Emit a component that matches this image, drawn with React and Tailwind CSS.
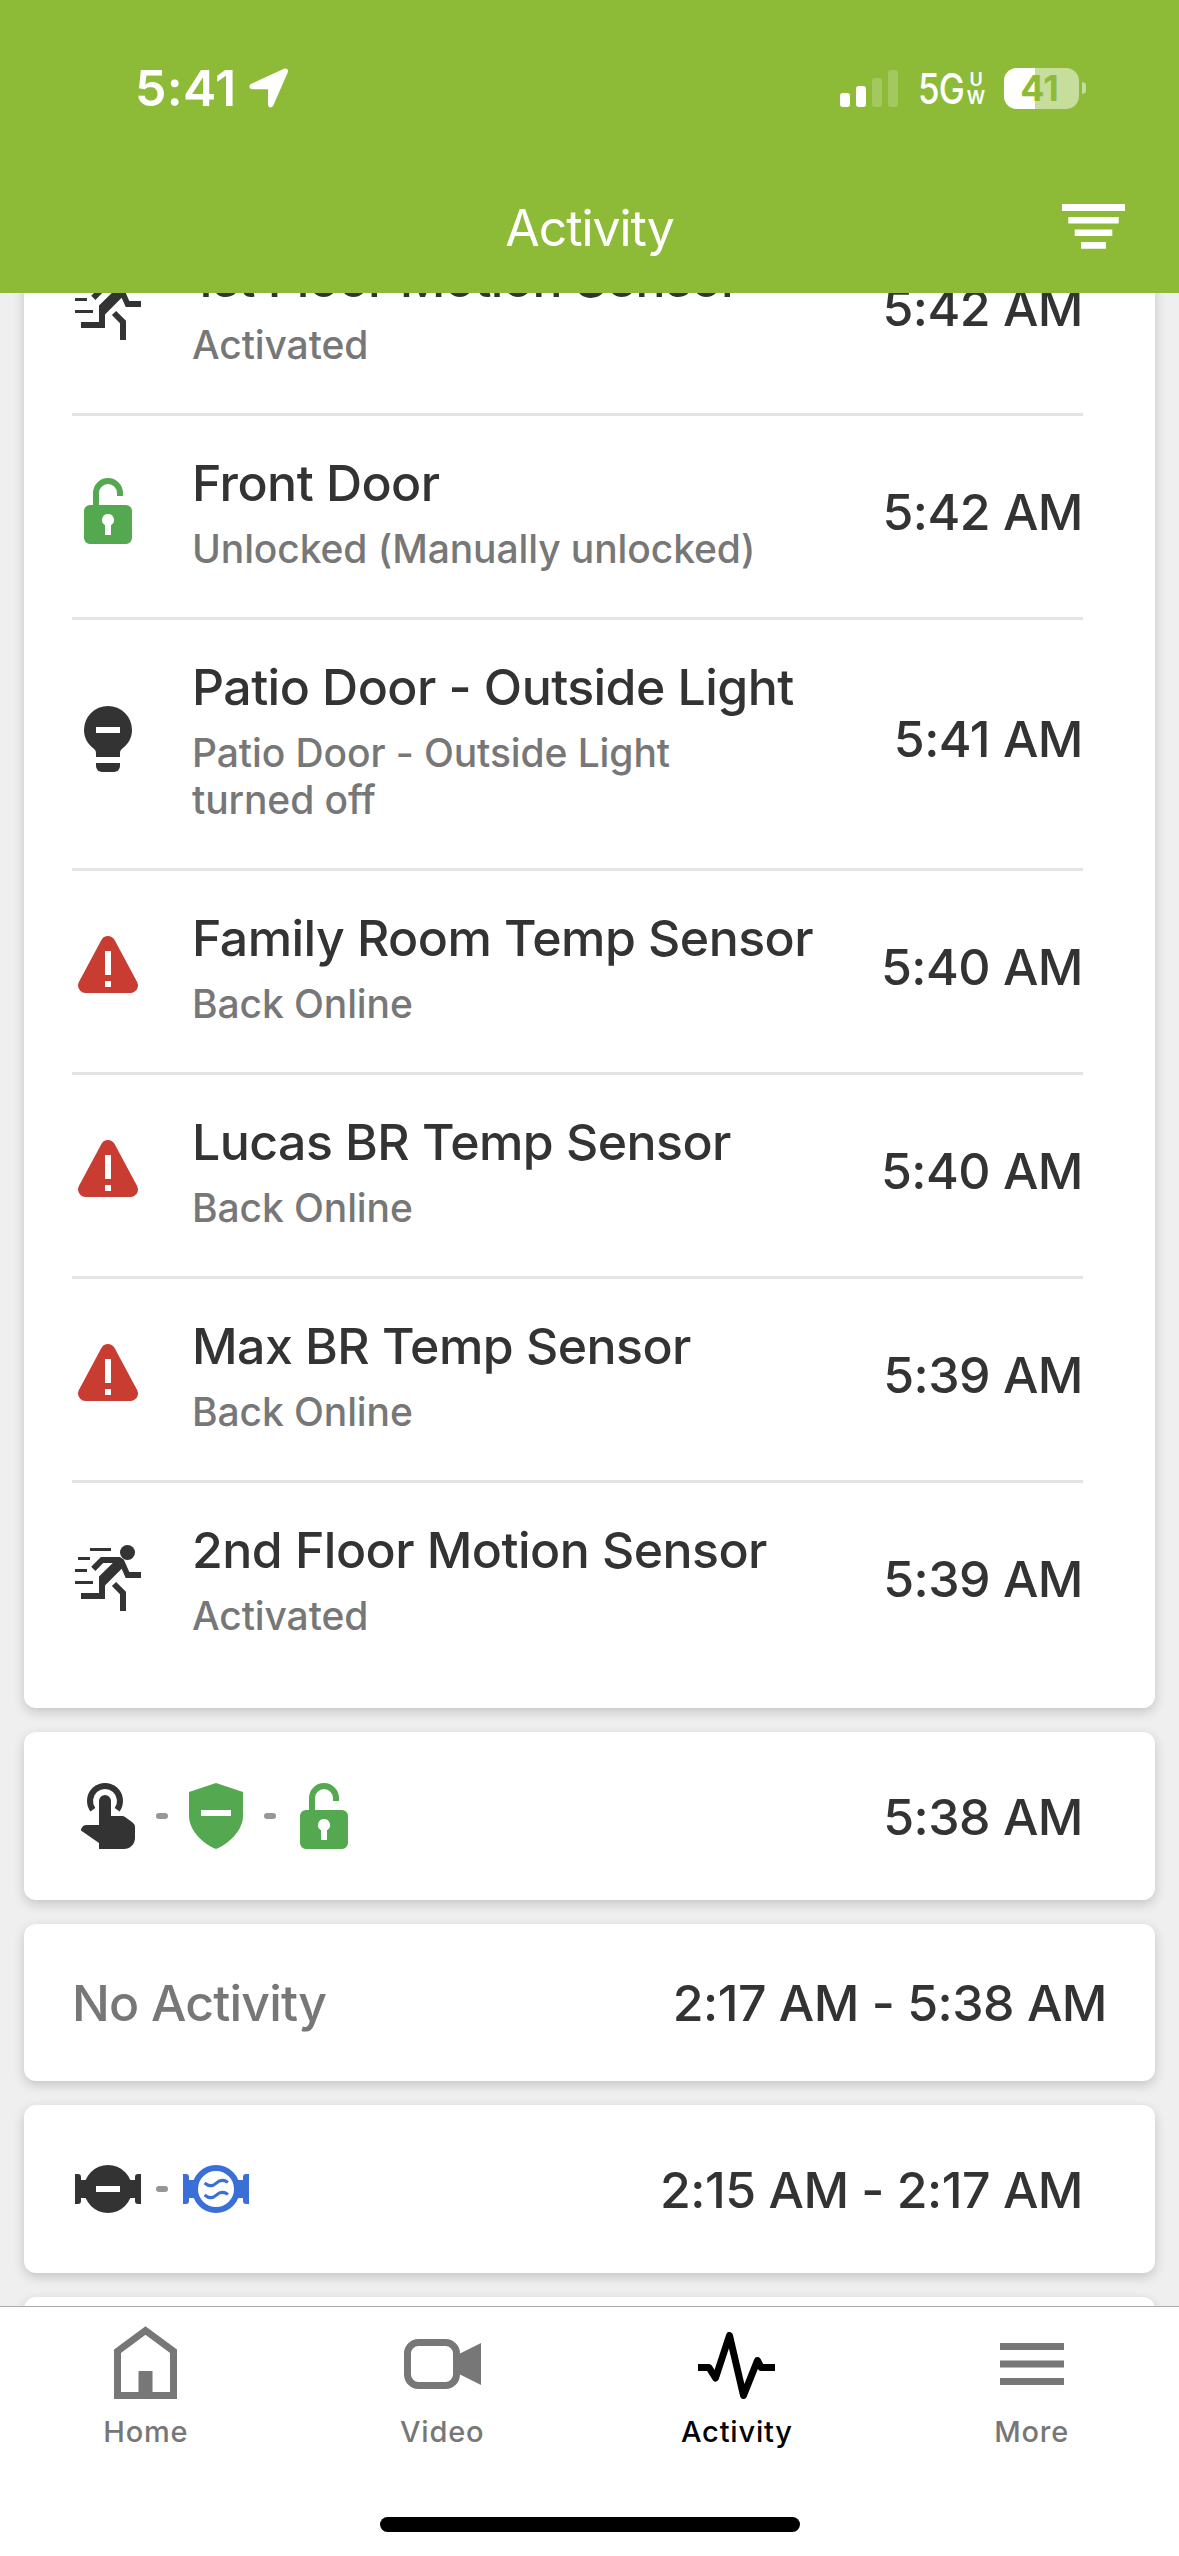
import React from 'react';

const UnlockIcon = () => (
    <svg viewBox="0 0 24 24" className="size-[72px] text-[#54a84f]" fill="currentColor">
        <path d="M7 11V6a5 5 0 0 1 10 0v1h-2V6a3 3 0 0 0-6 0v5z" />
        <path
            fillRule="evenodd"
            d="M6 10h12a2 2 0 0 1 2 2v9a2 2 0 0 1-2 2H6a2 2 0 0 1-2-2v-9a2 2 0 0 1 2-2zm6 3a2 2 0 0 0-1 3.73V20h2v-3.27A2 2 0 0 0 12 13z"
        />
    </svg>
);

const BulbIcon = () => (
    <svg viewBox="0 0 24 24" className="size-[72px] text-[#333]" fill="currentColor">
        <path
            fillRule="evenodd"
            d="M12 1a8 8 0 0 1 8 8c0 2.600-1.200 4.600-3.200 6.200-.5.4-.8.9-.8 1.600V18H8v-1.200c0-.7-.3-1.200-.8-1.600C5.200 13.600 4 11.600 4 9a8 8 0 0 1 8-8zM8 8v2h8V8z"
        />
        <path d="M8 20h8v1a2 2 0 0 1-2 2h-4a2 2 0 0 1-2-2z" />
    </svg>
);

const WarningIcon = () => (
    <svg viewBox="0 0 24 24" className="size-[72px]">
        <path d="M12 4.500 19.500 18.500h-15z" fill="#c83c32" stroke="#c83c32" strokeWidth="5" strokeLinejoin="round" />
        <path d="M11 7h2v8h-2zM11 17h2v2h-2z" fill="#fff" />
    </svg>
);

const MotionIcon = () => (
    <svg viewBox="0 0 24 24" className="size-[72px] text-[#333]" fill="currentColor">
        <path d="M6 2h7v1H6zM2 5h4v1H2zM1 9h4v1H1zM1 13h6v1H1z" />
        <circle cx="18.500" cy="3.500" r="2.500" />
        <path d="M3 17h6v-5.500L13.600 7h-3.200L7.800 9.700 6.400 8.250 9.650 5H16l1.250.8L19.100 10H23v2h-5.100l-1.350-3.100L11 14.500V19H3z" />
        <path d="M14.700 13.300 18 16.600V23h-2v-5.600l-2.700-2.700z" />
    </svg>
);

const TouchIcon = () => (
    <svg viewBox="0 0 24 24" className="size-[72px] text-[#333]">
        <path d="M6.950 9.900a5 5 0 1 1 8.100 0" fill="none" stroke="currentColor" strokeWidth="2" />
        <path
            fill="currentColor"
            d="M9 7a2 2 0 0 1 4 0v5h3.700q.6 0 1.100.4l2.400 1.800q.8.600.8 1.600v3.500a3.700 3.700 0 0 1-3.700 3.700H9v-2l-6-4.200v-.2A2 2 0 0 1 5 15h4z"
        />
    </svg>
);

const ShieldIcon = () => (
    <svg viewBox="0 0 24 24" className="size-[72px] text-[#54a84f]" fill="currentColor">
        <path
            fillRule="evenodd"
            d="M12 1l9 3v7.800c0 4.400-3.600 8.800-9 11.200-5.400-2.400-9-6.800-9-11.200V4zM7 10v2h10v-2z"
        />
    </svg>
);

const ValveBody = () => (
    <path
        fill="currentColor"
        d="M1 7h1a1 1 0 0 1 1 1v1h3v6H3v1a1 1 0 0 1-1 1H1zM23 7h-1a1 1 0 0 0-1 1v1h-3v6h3v1a1 1 0 0 0 1 1h1z"
    />
);

const ValveClosedIcon = () => (
    <svg viewBox="0 0 24 24" className="size-[72px] text-[#333]">
        <ValveBody />
        <circle cx="12" cy="12" r="8" fill="currentColor" />
        <path d="M8 11h8v2H8z" fill="#fff" />
    </svg>
);

const ValveOpenIcon = () => (
    <svg viewBox="0 0 24 24" className="size-[72px] text-[#396fd6]">
        <ValveBody />
        <circle cx="12" cy="12" r="7" fill="#fff" stroke="currentColor" strokeWidth="2" />
        <path
            d="M8.200 10c1.300 1.100 2.700 1.100 3.800.1s2.600-1.300 4-.3M8.200 14c1.300 1.100 2.700 1.100 3.800.1s2.600-1.300 4-.3"
            fill="none"
            stroke="currentColor"
            strokeWidth="1"
        />
    </svg>
);

const HomeIcon = () => (
    <svg viewBox="0 0 63 73" className="w-[63px] h-[73px] mb-1">
        <path d="M3.500 25.300 31.500 4.500l28 20.800v44.200h-56z" fill="none" stroke="currentColor" strokeWidth="7" />
        <path d="M24.500 45h14v24h-14z" fill="currentColor" />
    </svg>
);

const VideoIcon = () => (
    <svg viewBox="0 0 77 50" className="w-[77px] h-[50px]">
        <rect x="3.500" y="3.500" width="49" height="43" rx="11" fill="none" stroke="currentColor" strokeWidth="7" />
        <path d="M53 16 77 4v42L53 34z" fill="currentColor" />
    </svg>
);

const PulseIcon = () => (
    <svg viewBox="0 0 77 67" className="w-[77px] h-[67px] mt-0.5">
        <path
            d="M0 35.500h11L17.500 46 31.500 3.500 45.500 63.500 59.500 28.500 63 35.500H77"
            fill="none"
            stroke="currentColor"
            strokeWidth="7"
            strokeLinejoin="round"
        />
    </svg>
);

const MenuIcon = () => (
    <svg viewBox="0 0 64 42" className="w-[64px] h-[42px]" fill="currentColor">
        <path d="M0 0h64v7H0zM0 17.500h64v7H0zM0 35h64v7H0z" />
    </svg>
);

const events = [
    { icon: MotionIcon, name: '1st Floor Motion Sensor', detail: 'Activated', time: '5:42 AM' },
    { icon: UnlockIcon, name: 'Front Door', detail: 'Unlocked (Manually unlocked)', time: '5:42 AM' },
    { icon: BulbIcon, name: 'Patio Door - Outside Light', detail: 'Patio Door - Outside Light turned off', time: '5:41 AM' },
    { icon: WarningIcon, name: 'Family Room Temp Sensor', detail: 'Back Online', time: '5:40 AM' },
    { icon: WarningIcon, name: 'Lucas BR Temp Sensor', detail: 'Back Online', time: '5:40 AM' },
    { icon: WarningIcon, name: 'Max BR Temp Sensor', detail: 'Back Online', time: '5:39 AM' },
    { icon: MotionIcon, name: '2nd Floor Motion Sensor', detail: 'Activated', time: '5:39 AM' },
];

const tabs = [
    { label: 'Home', icon: HomeIcon },
    { label: 'Video', icon: VideoIcon },
    { label: 'Activity', icon: PulseIcon, active: true },
    { label: 'More', icon: MenuIcon },
];

const Card = ({ className = '', children }) => (
    <div className={`bg-white rounded-xl shadow-[0_4px_12px_rgba(0,0,0,0.18)] shrink-0 ${className}`}>
        {children}
    </div>
);

const Time = ({ children }) => (
    <span className="pt-px text-[50px] leading-[64px] tracking-[-0.5px] whitespace-nowrap">{children}</span>
);

const EventRow = ({ icon: Icon, name, detail, time, last }) => (
    <div className={`flex items-center pt-[34px] pb-[45px] ${last ? '' : 'border-b-[3px] border-[#e4e4e4]'}`}>
        <Icon />
        <div className="ml-12 pt-px flex-1 min-w-0">
            <div className="text-[50px] leading-[64px] tracking-[-0.55px] whitespace-nowrap">{name}</div>
            <div className="mt-2.5 max-w-[575px] text-[39px] leading-[47px] tracking-[-0.1px] text-[#777]">{detail}</div>
        </div>
        <Time>{time}</Time>
    </div>
);

const IconSummary = ({ icons, time }) => (
    <Card className="h-[168px] pl-12 pr-[72px] flex items-center justify-between">
        <div className="flex items-center gap-3">
            {icons.map((Icon, index) => (
                <React.Fragment key={index}>
                    {index > 0 && <span className="w-3 h-1.5 rounded-full bg-[#969696]" />}
                    <Icon />
                </React.Fragment>
            ))}
        </div>
        <Time>{time}</Time>
    </Card>
);

const StatusBar = () => (
    <div className="h-[176px] pl-[135px] pr-[93px] flex items-center justify-between">
        <div className="flex items-center gap-[13px]">
            <span className="text-[50px] leading-none font-semibold tracking-[0.3px]">5:41</span>
            <svg viewBox="0 0 40 40" className="size-10" fill="currentColor">
                <path d="M35 .8c2.700-1.200 4.900.900 3.700 3.700L24.300 37.600c-1.300 2.900-5.300 2.100-5.300-1.100V21.200H3.500C.2 21.200-.700 17.200 2.300 15.800z" />
            </svg>
        </div>
        <div className="flex items-center">
            <div className="flex items-end gap-1.5 h-[37px]">
                <span className="w-2.5 h-3.5 rounded-[3px] bg-white" />
                <span className="w-2.5 h-[21px] rounded-[3px] bg-white" />
                <span className="w-2.5 h-[29px] rounded-[3px] bg-white/20" />
                <span className="w-2.5 h-[37px] rounded-[3px] bg-white/20" />
            </div>
            <div className="ml-5 mt-0.5 flex items-center">
                <span className="w-[48px] text-[42px] leading-none font-medium tracking-[-1px] whitespace-nowrap origin-left scale-x-[0.83]">5G</span>
                <span className="ml-0.5 w-4 flex flex-col items-center text-[18px] leading-[18px] font-semibold">
                    <span>U</span>
                    <span>W</span>
                </span>
            </div>
            <div className="ml-5 relative w-[75px] h-[41px] rounded-[13px] bg-white/50 overflow-hidden">
                <div className="w-[31px] h-full bg-white" />
                <span className="absolute inset-0 pr-1 flex items-center justify-center text-[36px] leading-none font-bold text-[#8dbb38]">
                    41
                </span>
            </div>
            <span className="ml-[3px] w-1 h-3 rounded-r-full bg-white/50" />
        </div>
    </div>
);

const Header = () => (
    <header className="h-[293px] shrink-0 relative z-10 bg-[#8dbb38] text-white">
        <StatusBar />
        <div className="h-[105px] grid grid-cols-3 items-center px-[54px]">
            <h1 className="col-start-2 mb-0.5 text-[50px] leading-none tracking-[-1.1px] font-normal text-center">Activity</h1>
            <svg viewBox="0 0 63 45" className="justify-self-end mb-1 w-[63px] h-[45px]" fill="currentColor">
                <path d="M0 0h63v7H0zM6.300 13h50.400v6.600H6.300zM12.700 25.500h37.600v6.500H12.700zM19 38h25v6.700H19z" />
            </svg>
        </div>
    </header>
);

const TabBar = () => (
    <nav className="h-[250px] shrink-0 relative z-10 bg-white border-t border-[#aaa] flex flex-col items-center">
        <div className="w-full grid grid-cols-4">
            {tabs.map(({ label, icon: Icon, active }) => (
                <div key={label} className={`flex flex-col items-center first:pr-[3px] ${active ? 'text-black' : 'text-[#777]'}`}>
                    <div className="h-[114px] flex items-center">
                        <Icon />
                    </div>
                    <span className="text-[29px] leading-[21px] tracking-[0.8px]">{label}</span>
                </div>
            ))}
        </div>
        <div className="mt-auto mb-6 w-[420px] h-[15px] rounded-full bg-black" />
    </nav>
);

export default function App() {
    return (
        <div className="w-[1179px] h-[2556px] flex flex-col overflow-hidden bg-[#efefef] text-[#333] font-[450] font-[Inter,sans-serif]">
            <Header />
            <main className="flex-1 min-h-0 px-6 flex flex-col gap-6 overflow-hidden">
                {/* the list is scrolled, so its first row starts under the header */}
                <Card className="-mt-[81px] pl-12 pr-[72px] pb-6">
                    {events.map((event, index) => (
                        <EventRow key={index} {...event} last={index === events.length - 1} />
                    ))}
                </Card>
                <IconSummary icons={[TouchIcon, ShieldIcon, UnlockIcon]} time="5:38 AM" />
                <Card className="h-[157px] px-12 flex items-center justify-between">
                    <span className="text-[50px] leading-[64px] tracking-[-0.8px] text-[#777]">No Activity</span>
                    <Time>2:17 AM - 5:38 AM</Time>
                </Card>
                <IconSummary icons={[ValveClosedIcon, ValveOpenIcon]} time="2:15 AM - 2:17 AM" />
                <Card className="h-[168px]" />
            </main>
            <TabBar />
        </div>
    );
}
